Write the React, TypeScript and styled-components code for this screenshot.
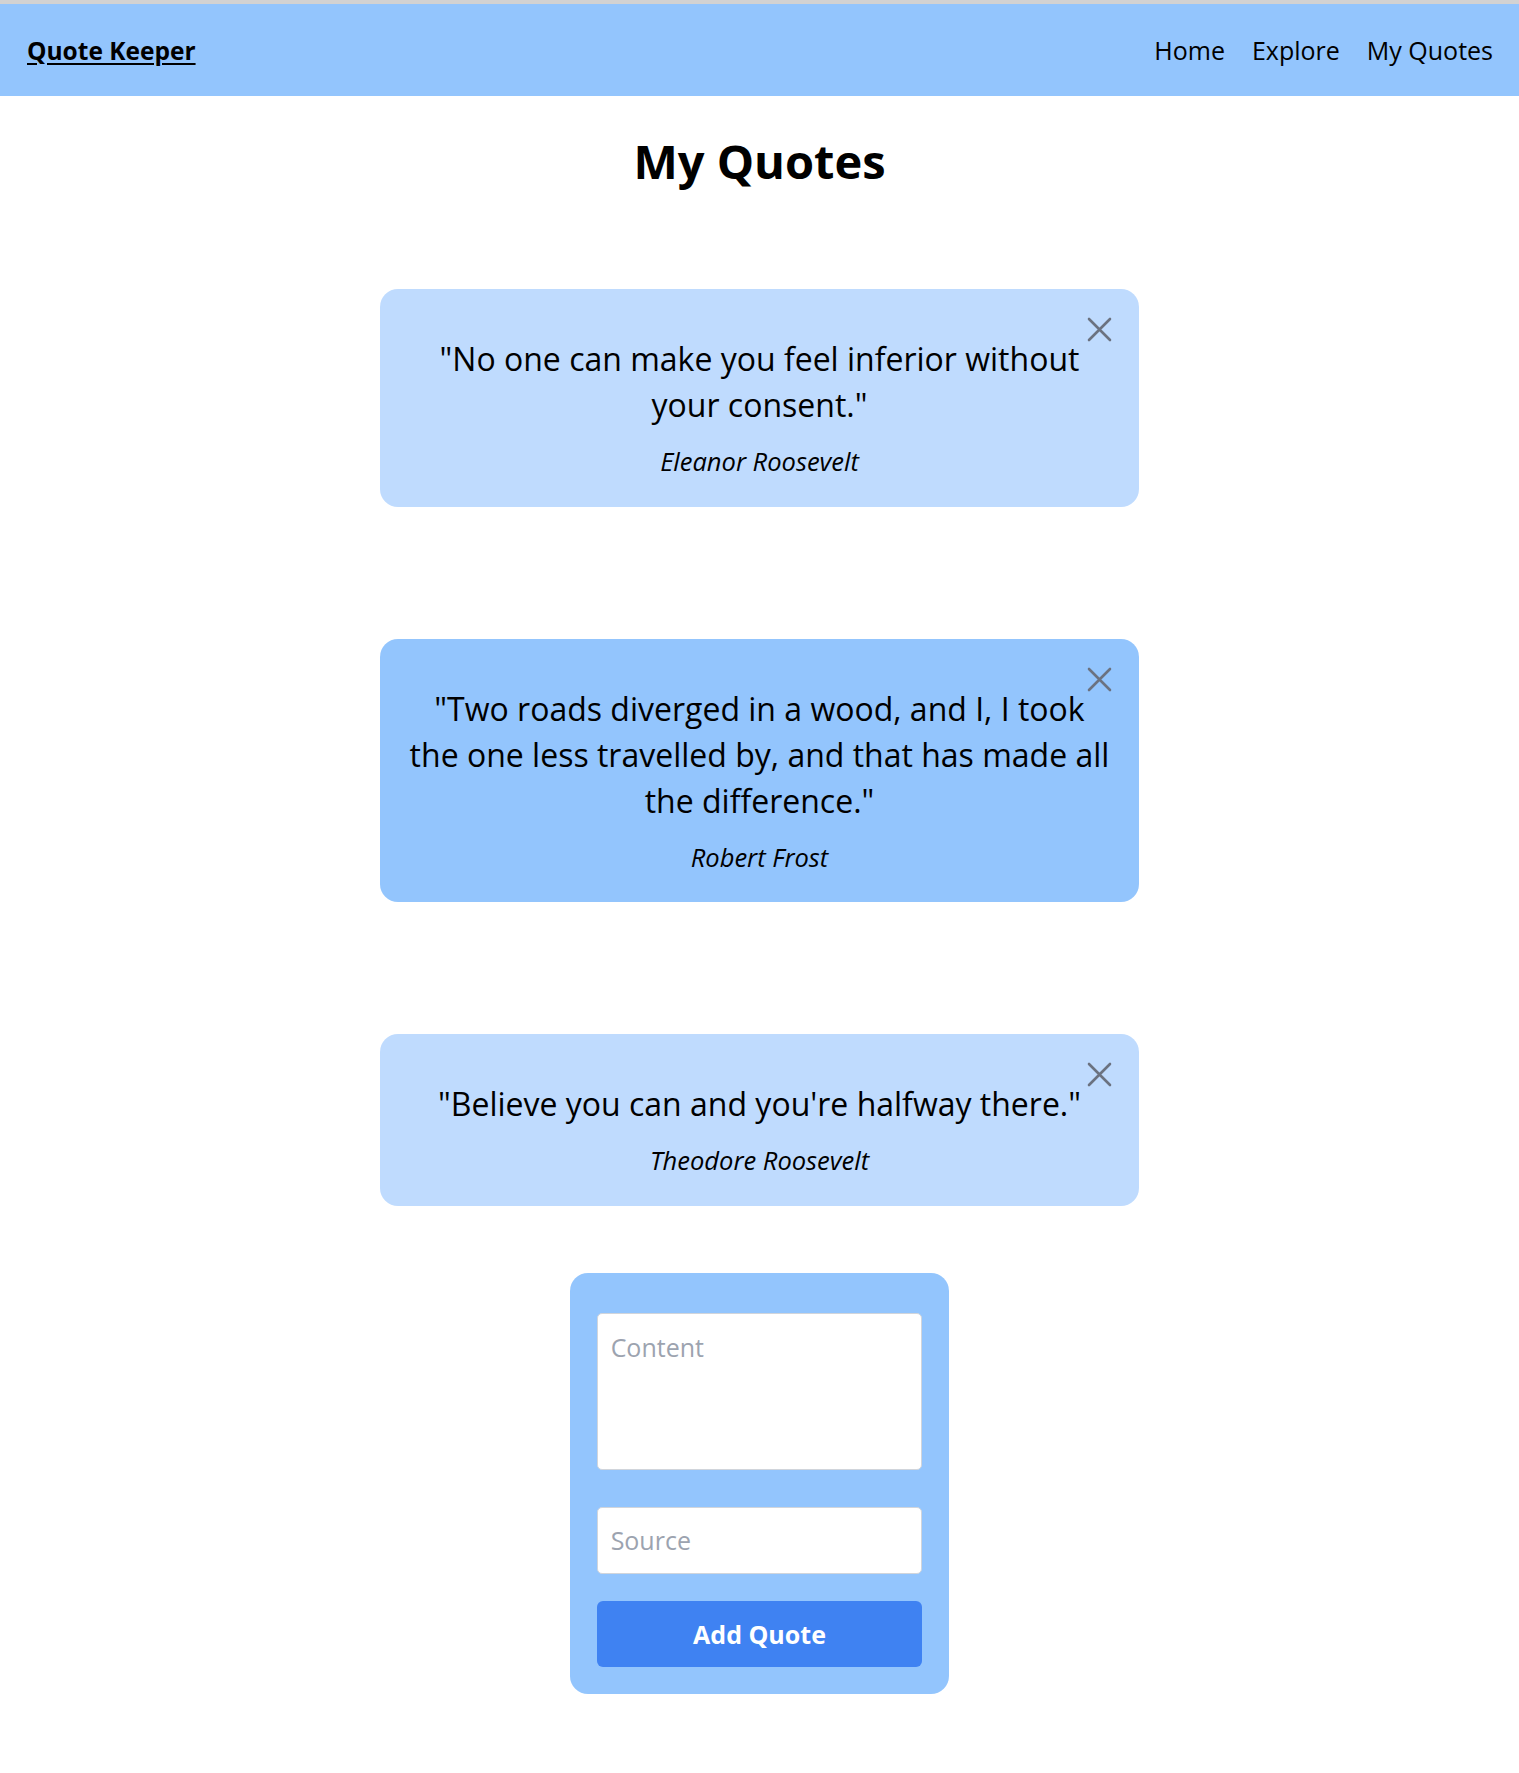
import React from "react";
import styled, { createGlobalStyle } from "styled-components";

const GlobalStyle = createGlobalStyle`
  html, body {
    margin: 0;
    padding: 0;
    background: #ffffff;
  }
  body {
    font-family: "Open Sans", "Noto Sans", sans-serif;
    color: #000000;
  }
  * { box-sizing: border-box; }
`;

const TopRule = styled.div`
  height: 4px;
  background: #d2d2d2;
`;

const NavBar = styled.nav`
  height: 92px;
  background: #93c5fd;
  display: flex;
  align-items: center;
  justify-content: space-between;
  padding: 0 26px 0 27px;
`;

const Brand = styled.a`
  font-size: 24.5px;
  font-weight: 700;
  color: #000;
  text-decoration: underline;
  text-underline-offset: 3px;
`;

const NavLinks = styled.div`
  display: flex;
  gap: 27px;
`;

const NavLink = styled.a`
  font-size: 25px;
  color: #000;
  text-decoration: none;
`;

const Main = styled.main`
  display: flex;
  flex-direction: column;
  align-items: center;
  padding-bottom: 80px;
`;

const Title = styled.h1`
  margin: 33px 0 95px;
  font-size: 47px;
  font-weight: 700;
  line-height: 65px;
`;

const CardList = styled.div`
  width: 50%;
  display: flex;
  flex-direction: column;
  gap: 132px;
`;

const Card = styled.article<{ $tone: "light" | "mid" }>`
  position: relative;
  background: ${(p) => (p.$tone === "light" ? "#bfdbfe" : "#93c5fd")};
  border-radius: 18px;
  padding: 47px 28px 29px;
  display: flex;
  flex-direction: column;
  align-items: center;
  gap: 17px;
  text-align: center;
`;

const QuoteText = styled.p`
  margin: 0;
  font-size: 32px;
  font-weight: 500;
  line-height: 46px;
`;

const Author = styled.p`
  margin: 0;
  font-size: 25.5px;
  font-style: italic;
  line-height: 32.5px;
`;

const CloseButton = styled.button`
  position: absolute;
  top: 28px;
  right: 27px;
  width: 25px;
  height: 25px;
  padding: 0;
  border: none;
  background: transparent;
  cursor: pointer;
  display: flex;
  svg { display: block; }
`;

const Form = styled.form`
  width: 25%;
  margin-top: 67px;
  background: #93c5fd;
  border-radius: 18px;
  padding: 40px 27px 27px;
  display: flex;
  flex-direction: column;
`;

const fieldBase = `
  width: 100%;
  border: 1px solid #d1d5db;
  border-radius: 5px;
  background: #fff;
  font-family: "Open Sans", "Noto Sans", sans-serif;
  font-size: 25px;
  color: #111;
  outline: none;
  &::placeholder { color: #9ca3af; }
`;

const ContentArea = styled.textarea`
  ${fieldBase}
  height: 157px;
  padding: 16px 13px;
  resize: none;
  line-height: 34px;
  display: block;
`;

const SourceInput = styled.input`
  ${fieldBase}
  height: 67px;
  margin-top: 37px;
  padding: 0 13px;
`;

const SubmitButton = styled.button`
  margin-top: 27px;
  height: 66px;
  border: none;
  border-radius: 6px;
  background: #3f82f2;
  color: #fff;
  font-family: "Open Sans", "Noto Sans", sans-serif;
  font-size: 25px;
  font-weight: 700;
  cursor: pointer;
`;

const CloseIcon = () => (
  <svg width="25" height="25" viewBox="0 0 25 25" fill="none">
    <path d="M2 2 L23 23 M23 2 L2 23" stroke="#6b7280" strokeWidth="2.6" strokeLinecap="round" />
  </svg>
);

const quotes = [
  { text: "No one can make you feel inferior without your consent.", author: "Eleanor Roosevelt" },
  {
    text: "Two roads diverged in a wood, and I, I took the one less travelled by, and that has made all the difference.",
    author: "Robert Frost",
  },
  { text: "Believe you can and you're halfway there.", author: "Theodore Roosevelt" },
];

export default function App() {
  return (
    <>
      <GlobalStyle />
      <TopRule />
      <NavBar>
        <Brand href="#">Quote Keeper</Brand>
        <NavLinks>
          <NavLink href="#">Home</NavLink>
          <NavLink href="#">Explore</NavLink>
          <NavLink href="#">My Quotes</NavLink>
        </NavLinks>
      </NavBar>
      <Main>
        <Title>My Quotes</Title>
        <CardList>
          {quotes.map((q, i) => (
            <Card key={i} $tone={i % 2 === 0 ? "light" : "mid"}>
              <CloseButton type="button" aria-label="Delete quote">
                <CloseIcon />
              </CloseButton>
              <QuoteText>"{q.text}"</QuoteText>
              <Author>{q.author}</Author>
            </Card>
          ))}
        </CardList>
        <Form onSubmit={(e) => e.preventDefault()}>
          <ContentArea placeholder="Content" />
          <SourceInput placeholder="Source" />
          <SubmitButton type="submit">Add Quote</SubmitButton>
        </Form>
      </Main>
    </>
  );
}
